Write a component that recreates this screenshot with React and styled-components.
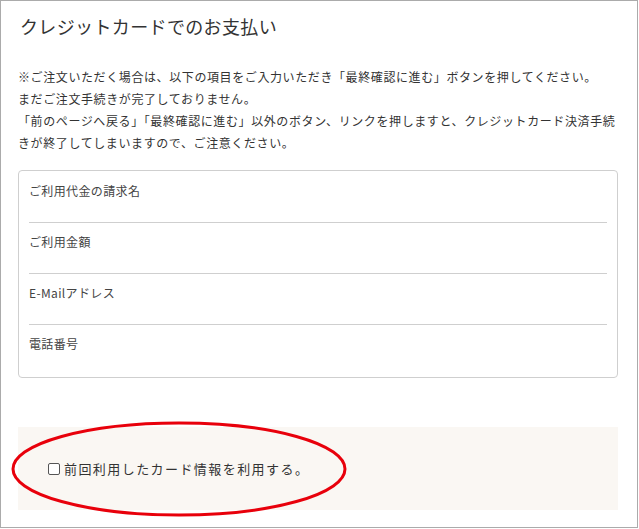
import styled, { createGlobalStyle } from 'styled-components';

const GlobalStyle = createGlobalStyle`
  html, body {
    margin: 0;
    padding: 0;
    background: #fff;
  }
  body {
    font-family: "Noto Sans CJK JP", "Noto Sans", sans-serif;
    color: #333;
  }
`;

const fields = ['ご利用代金の請求名', 'ご利用金額', 'E-Mailアドレス', '電話番号'];

const App = () => {
  return (
    <>
      <GlobalStyle />
      <Frame>
        <Title>クレジットカードでのお支払い</Title>
        <Notice>
          ※ご注文いただく場合は、以下の項目をご入力いただき「最終確認に進む」ボタンを押してください。
          <br />
          まだご注文手続きが完了しておりません。
          <br />
          「前のページへ戻る」「最終確認に進む」以外のボタン、リンクを押しますと、クレジットカード決済手続きが終了してしまいますので、ご注意ください。
        </Notice>
        <FieldBox>
          {fields.map((f, i) => (
            <FieldRow key={f} first={i === 0} last={i === fields.length - 1}>
              <FieldLabel>{f}</FieldLabel>
            </FieldRow>
          ))}
        </FieldBox>
        <ReusePanel>
          <CheckLabel>
            <Box type="checkbox" />
            前回利用したカード情報を利用する。
          </CheckLabel>
          <Circle viewBox="0 0 340 100" width="340" height="100">
            <ellipse cx="170" cy="50" rx="166" ry="46" fill="none" stroke="#e8000b" strokeWidth="3" />
          </Circle>
        </ReusePanel>
      </Frame>
    </>
  );
};

const Frame = styled.div`
  box-sizing: border-box;
  width: 638px;
  height: 528px;
  border: 1px solid #ababab;
  padding: 0 19px 0 17px;
  display: flex;
  flex-direction: column;
`;

const Title = styled.h1`
  margin: 0;
  padding: 12px 0 0 2px;
  font-size: 18px;
  font-weight: 400;
  line-height: 26px;
  letter-spacing: 0.02em;
  color: #333;
`;

const Notice = styled.p`
  margin: 27px 0 0;
  font-size: 12px;
  line-height: 22px;
  letter-spacing: 0.05em;
  color: #333;
`;

const FieldBox = styled.div`
  margin-top: 16px;
  border: 1px solid #cfcfcf;
  border-radius: 4px;
  padding: 0 10px;
`;

const FieldRow = styled.div`
  padding: ${(p) => (p.first ? '10px' : '9px')} 0 ${(p) => (p.last ? '23px' : '21px')};
  border-bottom: ${(p) => (p.last ? 'none' : '1px solid #cfcfcf')};
`;

const FieldLabel = styled.div`
  font-size: 12px;
  line-height: 20px;
  letter-spacing: 0.03em;
  color: #444;
`;

const ReusePanel = styled.div`
  position: relative;
  margin-top: 49px;
  height: 83px;
  background: #faf7f3;
  padding-left: 30px;
  display: flex;
  align-items: center;
`;

const CheckLabel = styled.label`
  display: flex;
  align-items: center;
  font-size: 13px;
  letter-spacing: 0.11em;
  color: #333;
`;

const Box = styled.input`
  appearance: none;
  width: 12px;
  height: 12px;
  margin: 1px 4px 0 0;
  border: 1px solid #555;
  border-radius: 2px;
  background: #fff;
`;

const Circle = styled.svg`
  position: absolute;
  left: -9px;
  top: -8px;
  pointer-events: none;
  overflow: visible;
`;

export default App;
